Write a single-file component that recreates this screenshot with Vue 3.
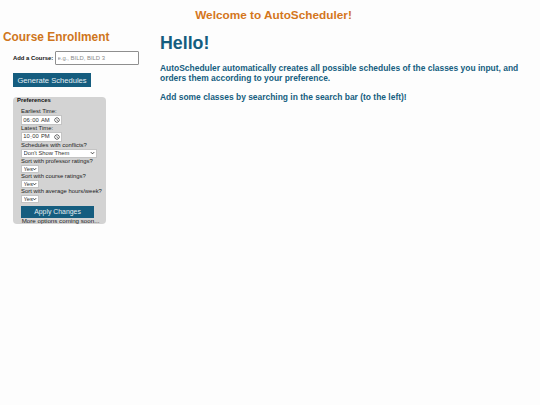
<script setup>
const yesNo = ['Sort with professor ratings?', 'Sort with course ratings?', 'Sort with average hours/week?']
</script>

<template>
  <div class="page">
    <header class="banner">Welcome to AutoScheduler!</header>
    <div class="columns">
      <aside class="side">
        <h2 class="title">Course Enrollment</h2>
        <div class="add">
          <label class="add-label" for="course">Add a Course:</label>
          <input id="course" class="course" type="text" placeholder="e.g., BILD, BILD 3" />
        </div>
        <button class="generate">Generate Schedules</button>
        <section class="prefs">
          <div class="prefs-title">Preferences</div>
          <div class="fields">
            <label>Earliest Time:</label>
            <input class="time" type="time" value="06:00" />
            <label>Latest Time:</label>
            <input class="time" type="time" value="22:00" />
            <label>Schedules with conflicts?</label>
            <select class="pick conflicts"><option>Don't Show Them</option></select>
            <template v-for="q in yesNo" :key="q">
              <label>{{ q }}</label>
              <select class="pick yes"><option>Yes</option></select>
            </template>
            <button class="apply">Apply Changes</button>
          </div>
          <div class="more">More options coming soon...</div>
        </section>
      </aside>
      <main class="main">
        <h1 class="hello">Hello!</h1>
        <p class="copy">AutoScheduler automatically creates all possible schedules of the classes you input, and orders them according to your preference.</p>
        <p class="copy">Add some classes by searching in the search bar (to the left)!</p>
      </main>
    </div>
  </div>
</template>

<style>
html, body { margin: 0; background: #fdfdfd; }
</style>

<style scoped>
.page { width: 540px; height: 405px; font-family: "Liberation Sans", Arial, sans-serif; overflow: hidden; }
.banner { text-align: center; color: #d4761c; font-weight: 700; font-size: 11.8px; line-height: 15px; padding: 8px 0 0 7px; height: 22px; }
.columns { display: flex; }
.side { width: 150px; flex: none; }
.title { margin: 0; padding: 0 0 0 3px; color: #cf761c; font-size: 11.9px; line-height: 15px; font-weight: 700; }
.add { display: flex; align-items: center; margin: 6px 0 0 13px; }
.add-label { font-size: 5.9px; font-weight: 700; color: #111; width: 42px; white-space: nowrap; }
.course { width: 84px; height: 14px; box-sizing: border-box; border: 1px solid #8f8f8f; border-radius: 1px; padding: 0 1.5px; font: 5.9px "Liberation Sans", Arial, sans-serif; background: #fff; outline: none; }
.course::placeholder { color: #8a8a8a; }
.generate { display: block; margin: 8px 0 0 13px; width: 78px; height: 14px; padding: 0; background: #155d7f; color: #e4eef3; border: none; font: 7.6px "Liberation Sans", Arial, sans-serif; }
.prefs { margin: 10px 0 0 13px; width: 93px; height: 127px; background: #d3d3d3; border-radius: 4px; }
.prefs-title { font-size: 5.9px; font-weight: 700; color: #111; line-height: 7px; margin-left: 4px; }
.fields { display: flex; flex-direction: column; align-items: flex-start; margin: 4px 0 0 8px; }
.fields label { font-size: 5.9px; line-height: 7px; color: #222; }
.time { zoom: 0.45; width: 92px; height: 22px; box-sizing: border-box; font: 13px "Liberation Sans", Arial, sans-serif; color: #333; padding: 0 0 0 2px; border: 1px solid #c4c4c4; background: #fff; }
.time::-webkit-datetime-edit { overflow: visible; padding: 0; }
.time::-webkit-datetime-edit-fields-wrapper { overflow: visible; }
.time::-webkit-calendar-picker-indicator { margin: 0; padding: 0 2px 0 0; }
.pick { appearance: none; box-sizing: border-box; height: 8px; font: 5.8px "Liberation Sans", Arial, sans-serif; line-height: 6px; padding: 0 0 0 1.5px; border: 0.5px solid #c4c4c4; border-radius: 0; color: #333; background: #fff url("data:image/svg+xml,%3Csvg xmlns='http://www.w3.org/2000/svg' width='5' height='4' viewBox='0 0 6 4'%3E%3Cpath d='M1 1l2 2 2-2' fill='none' stroke='%23222' stroke-width='1'/%3E%3C/svg%3E") no-repeat right 1px center; }
.conflicts { width: 76px; height: 9px; }
.yes { width: 18px; }
.apply { width: 73px; height: 12px; margin-top: 3px; padding: 0; background: #155d7f; color: #e4eef3; border: none; font: 6.9px "Liberation Sans", Arial, sans-serif; }
.more { font-size: 6.2px; line-height: 6px; color: #222; text-align: center; padding-left: 2px; }
.main { width: 365px; margin-left: 10px; color: #155d7f; }
.hello { margin: 3px 0 0; font-size: 17.8px; line-height: 21px; font-weight: 700; }
.copy { margin: 9px 0 0; font-size: 8.45px; line-height: 10px; font-weight: 700; }
</style>
